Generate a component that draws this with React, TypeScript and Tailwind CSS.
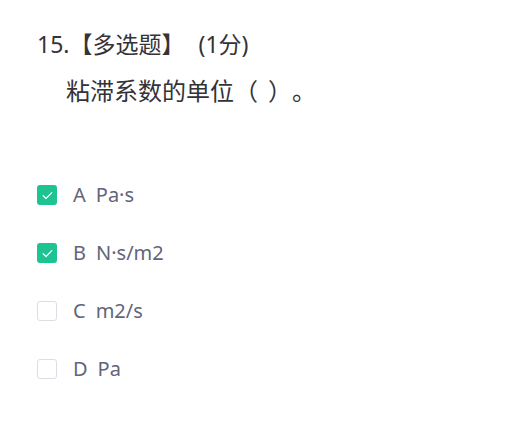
import React from 'react';

type Option = { key: string; text: string; checked: boolean };

const options: Option[] = [
  { key: 'A', text: 'Pa·s', checked: true },
  { key: 'B', text: 'N·s/m2', checked: true },
  { key: 'C', text: 'm2/s', checked: false },
  { key: 'D', text: 'Pa', checked: false },
];

const CheckBox: React.FC<{ checked: boolean }> = ({ checked }) =>
  checked ? (
    <span className="flex h-[20px] w-[20px] items-center justify-center rounded-[3px] bg-[#1dc492]">
      <svg width="13" height="13" viewBox="0 0 12 12" fill="none">
        <path d="M2 6.2l2.6 2.6L10 3.4" stroke="#fff" strokeWidth="1.1" strokeLinecap="round" strokeLinejoin="round" />
      </svg>
    </span>
  ) : (
    <span className="block h-[20px] w-[20px] rounded-[3px] border border-[#dcdee6] bg-white" />
  );

export default function App() {
  return (
    <div
      className="min-h-[446px] w-[515px] bg-white pl-[37px] pt-[28px]"
      style={{ fontFamily: '"Noto Sans", "Noto Sans CJK SC", sans-serif' }}
    >
      <div className="text-[23px] leading-[32px] text-[#333338]">
        15.【多选题】<span className="ml-[14px]">(1分)</span>
      </div>
      <div className="mt-[15px] pl-[29px] text-[24px] leading-[32px] text-[#333338]">
        粘滞系数的单位（<span className="inline-block w-[10px]" />）<span className="ml-[12px]">。</span>
      </div>

      <div className="mt-[78px] flex flex-col gap-[38px]">
        {options.map((o) => (
          <div key={o.key} className="flex h-[20px] items-center gap-[16px]">
            <CheckBox checked={o.checked} />
            <span className="text-[20px] leading-[20px] text-[#62657a]">
              <span className="mr-[10px]">{o.key}</span>
              {o.text}
            </span>
          </div>
        ))}
      </div>
    </div>
  );
}
